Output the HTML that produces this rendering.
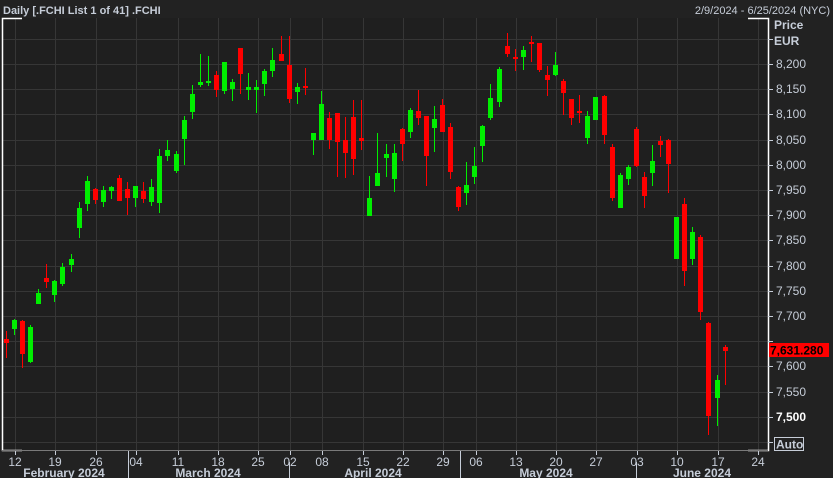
<!DOCTYPE html>
<html><head><meta charset="utf-8">
<style>
html,body{margin:0;padding:0;background:#222222;width:833px;height:478px;overflow:hidden;font-family:"Liberation Sans",sans-serif}
svg{position:absolute;left:0;top:0}
text{font-family:"Liberation Sans",sans-serif;font-size:12px;fill:#c6cdd8}
.b{font-weight:bold}
.s{font-size:11px}
</style></head><body>
<svg id="s" width="833" height="478" viewBox="0 0 833 478" xmlns="http://www.w3.org/2000/svg">
<rect x="0" y="0" width="833" height="478" fill="#222222"/>
<rect x="2" y="18" width="766" height="432" fill="#1f1f1f"/>
<g id="grid" stroke="#363636" stroke-width="1"></g>
<g id="c"></g>
<g stroke="#ffffff" stroke-width="1.5" fill="none">
<path d="M22 18.5H2.5V450.5H22"/>
<path d="M748 18.5H768.5V450.5H748"/>
</g>
<line x1="2" y1="450.5" x2="768" y2="450.5" stroke="#7a7a7a"/>
<g id="ax" stroke="#c6cdd8"></g>
<text x="3" y="14" class="b s">Daily [.FCHI List 1 of 41] .FCHI</text>
<text x="830" y="14" text-anchor="end" class="s">2/9/2024 - 6/25/2024 (NYC)</text>
<text x="774" y="29" class="b">Price</text>
<text x="774" y="45" class="b">EUR</text>
<g id="pl"></g>
<rect x="769" y="343" width="60" height="14" fill="#ff0000"/>
<text x="770" y="354.5" class="b" style="fill:#000">7,631.280</text>
<rect x="774.5" y="437.5" width="29" height="13" fill="none" stroke="#c6cdd8"/>
<text x="776" y="448.5" class="b">Auto</text>
<g id="xl"></g>
<text x="64" y="477" text-anchor="middle" class="b">February 2024</text>
<text x="208" y="477" text-anchor="middle" class="b">March 2024</text>
<text x="373" y="477" text-anchor="middle" class="b">April 2024</text>
<text x="546" y="477" text-anchor="middle" class="b">May 2024</text>
<text x="702" y="477" text-anchor="middle" class="b">June 2024</text>
<g stroke="#c6cdd8"><line x1="128.5" y1="452" x2="128.5" y2="478"/><line x1="289.5" y1="462" x2="289.5" y2="478"/><line x1="460.5" y1="452" x2="460.5" y2="478"/><line x1="636.5" y1="462" x2="636.5" y2="478"/></g>
</svg>
<script>
var NS="http://www.w3.org/2000/svg";
function el(p,t,a){var e=document.createElementNS(NS,t);for(var k in a)e.setAttribute(k,a[k]);p.appendChild(e);return e;}
var g=document.getElementById('grid'),ax=document.getElementById('ax'),pl=document.getElementById('pl'),xl=document.getElementById('xl');
var xs=[15,55,96,136,178,218,258,290,322,363,403,443,476,516,556,596,637,677,718,758];
var xn=["12","19","26","04","11","18","25","02","08","15","22","29","06","13","20","27","03","10","17","24"];
xs.forEach(function(x,i){if(x<766)el(g,'line',{x1:x+.5,y1:18,x2:x+.5,y2:450});el(ax,'line',{x1:x+.5,y1:451,x2:x+.5,y2:455});
var t=el(xl,'text',{x:x,y:466,'text-anchor':'middle'});t.textContent=xn[i];});
[128,460].forEach(function(x){el(ax,'line',{x1:x+.5,y1:451,x2:x+.5,y2:455});});
for(var k=-1;k<16;k++){var y=Math.round(64+k*25.2);if(y<20||y>449)continue;el(g,'line',{x1:2,y1:y+.5,x2:768,y2:y+.5});
var v=8200-k*50;el(ax,'line',{x1:768,y1:y+.5,x2:773,y2:y+.5});
if(y<55||y>425)continue;
var s=(v/1000|0)+","+("00"+(v%1000)).slice(-3);
if(y>335&&y<365)continue;
var t=el(pl,'text',{x:776,y:y+4});t.textContent=s;if(v==7500)t.setAttribute('class','b'),t.setAttribute('style','fill:#fff');}
var C=[
[6,'r',331,358,339,343],[14,'g',319,335,320,329],[22,'r',320,368,321,354],[30,'g',325,363,327,362],[38,'g',289,304,293,304],[46,'r',264,288,278,282],[54,'g',280,302,281,295],[62,'g',263,286,267,284],[71,'g',254,272,259,265],[79,'g',202,238,208,228],[87,'g',176,211,181,204],[95,'r',188,204,189,200],[103,'g',186,207,190,202],[111,'g',186,199,187,191],[119,'r',175,201,178,201],[127,'r',182,215,189,198],[135,'g',186,207,186,198],[143,'r',182,203,191,199],[151,'g',179,206,187,202],[159,'g',149,213,156,203],[167,'g',140,161,150,156],[176,'g',151,173,154,171],[184,'g',116,165,120,139],[192,'g',85,119,94,112],[200,'g',54,87,82,85],
[208,'g',56,86,81,83],[216,'r',71,97,75,90],[224,'g',62,94,62,91],[232,'g',79,101,82,89],[240,'r',48,94,48,74],[248,'g',73,100,87,90],[256,'g',80,113,87,90],[264,'g',69,96,71,84],[272,'g',48,77,60,71],[281,'r',36,61,54,61],[289,'r',36,103,65,99],[297,'g',83,104,87,92],[305,'r',68,95,86,88],[313,'g',133,155,133,140],[321,'g',91,140,104,140],[329,'r',112,149,118,140],[337,'r',113,177,113,142],[345,'r',117,178,140,153],[353,'r',100,175,117,159],[361,'r',100,150,138,141],[369,'g',176,216,198,216],[377,'g',133,186,173,186],[386,'g',144,177,154,158],[394,'g',144,192,153,179],
[402,'r',128,161,129,144],[410,'g',108,138,110,132],[418,'r',90,125,111,118],[426,'r',116,186,116,156],[434,'g',106,152,119,128],[442,'r',99,132,105,132],[450,'r',123,179,127,172],[458,'r',186,211,187,207],[466,'g',162,205,185,193],[474,'g',147,184,166,177],[482,'g',125,162,126,146],[490,'g',84,120,98,118],[499,'g',67,107,69,102],[507,'r',33,57,46,54],[515,'r',49,71,57,59],[523,'g',46,70,50,57],[531,'r',36,62,42,44],[539,'r',43,72,43,70],[547,'r',66,96,75,80],[555,'g',52,76,65,75],[563,'r',79,115,81,93],[571,'r',99,125,99,118],[579,'r',95,123,111,113],[587,'g',111,144,116,138],[595,'g',97,120,97,120],
[604,'r',95,144,96,135],[612,'r',144,201,147,198],[620,'g',173,208,175,208],[628,'g',165,185,167,179],[636,'r',127,167,129,166],[644,'r',172,208,177,196],[652,'g',145,186,161,173],[660,'r',136,157,141,145],[668,'r',139,193,140,164],[676,'g',217,259,217,259],[684,'r',198,286,204,271],[692,'g',227,265,232,259],[700,'r',235,320,237,312],[708,'r',322,435,323,416],[717,'g',375,426,380,398],[725,'r',345,385,347,351]];
var cg=document.getElementById('c');
C.forEach(function(c){var col=c[1]=='g'?'#00ee00':'#ff0000';
el(cg,'rect',{x:c[0],y:c[2],width:1,height:c[3]-c[2],fill:col});
var h=Math.max(2,c[5]-c[4]);el(cg,'rect',{x:c[0]-2,y:c[4],width:5,height:h,fill:col});});
</script>
</body></html>
